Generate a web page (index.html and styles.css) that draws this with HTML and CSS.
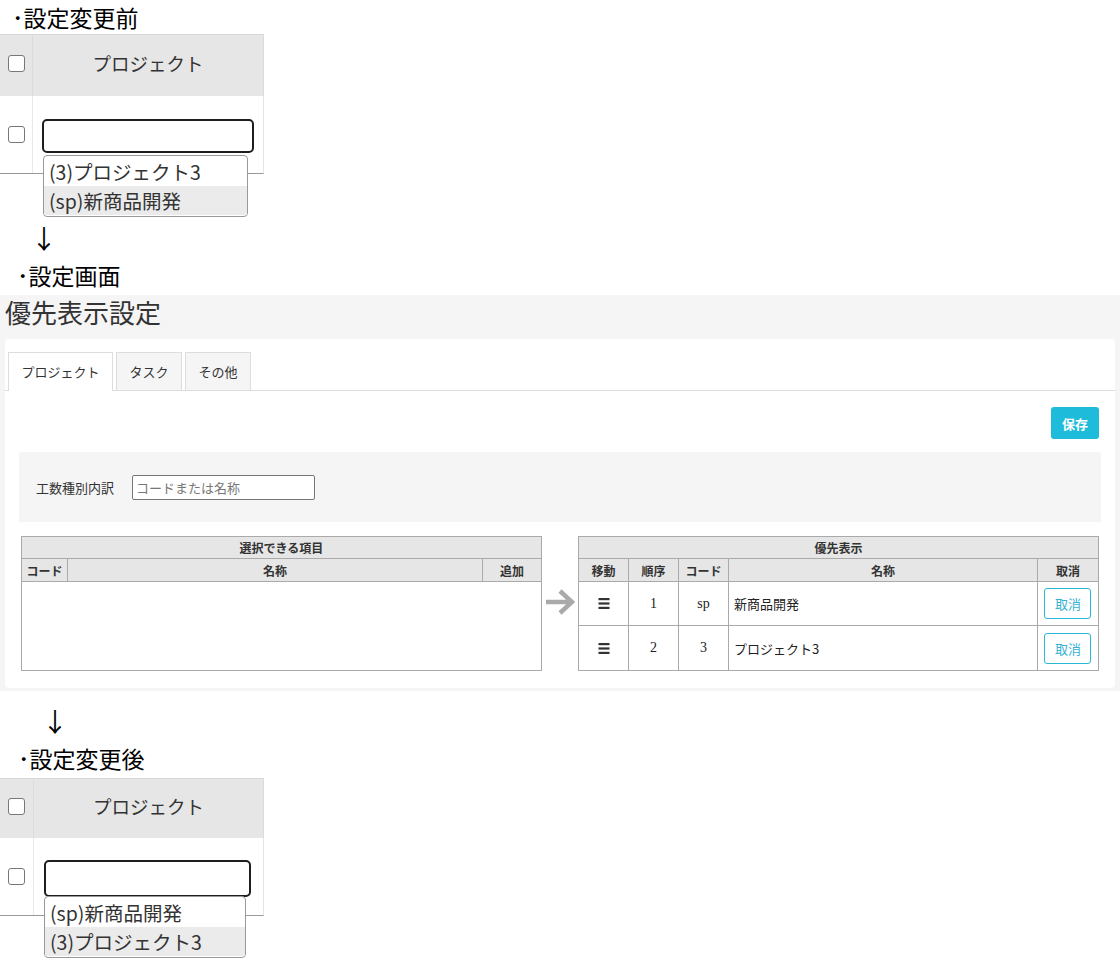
FILE: index.html
```html
<!DOCTYPE html>
<html lang="ja">
  <head>
    <meta charset="UTF-8" />
    <meta name="viewport" content="width=device-width, initial-scale=1.0" />
    <title>優先表示設定</title>
    <link rel="stylesheet" href="styles.css">
  </head>
  <body>
    <p class="caption caption-first">･設定変更前</p>

    <div class="snap">
      <div class="snap-head">
        <div class="snap-check"><span class="check"></span></div>
        <div class="snap-title">プロジェクト</div>
      </div>
      <div class="snap-row">
        <div class="snap-check"><span class="check"></span></div>
        <div class="snap-cell"><span class="snap-input"></span></div>
      </div>
      <ul class="suggest">
        <li>(3)プロジェクト3</li>
        <li class="active">(sp)新商品開発</li>
      </ul>
    </div>

    <p class="down">↓</p>
    <p class="caption">･設定画面</p>

    <div class="panel">
      <h1>優先表示設定</h1>
      <div class="card">
        <ul class="tabs">
          <li class="tab active">プロジェクト</li>
          <li class="tab">タスク</li>
          <li class="tab">その他</li>
        </ul>

        <div class="tab-body">
          <div class="toolbar">
            <button type="button" class="btn-save">保存</button>
          </div>

          <div class="filter">
            <label for="keyword">工数種別内訳</label>
            <input type="text" id="keyword" placeholder="コードまたは名称" />
          </div>

          <div class="lists">
            <table class="grid grid-source">
              <colgroup>
                <col class="w-code" />
                <col />
                <col class="w-add" />
              </colgroup>
              <thead>
                <tr class="grid-caption">
                  <th colspan="3">選択できる項目</th>
                </tr>
                <tr>
                  <th>コード</th>
                  <th>名称</th>
                  <th>追加</th>
                </tr>
              </thead>
              <tbody>
                <tr class="empty-row">
                  <td colspan="3"></td>
                </tr>
              </tbody>
            </table>

            <div class="move-arrow">
              <svg width="30" height="26" viewBox="0 0 30 26">
                <path d="M1 13 H27 M15 2 L27 13 L15 24" fill="none" stroke="#aaa" stroke-width="4.5" />
              </svg>
            </div>

            <table class="grid grid-target">
              <colgroup>
                <col class="w-small" />
                <col class="w-small" />
                <col class="w-small" />
                <col />
                <col class="w-cancel" />
              </colgroup>
              <thead>
                <tr class="grid-caption">
                  <th colspan="5">優先表示</th>
                </tr>
                <tr>
                  <th>移動</th>
                  <th>順序</th>
                  <th>コード</th>
                  <th>名称</th>
                  <th>取消</th>
                </tr>
              </thead>
              <tbody>
                <tr class="row-first">
                  <td class="handle">
                    <svg width="12" height="11" viewBox="0 0 12 11">
                      <rect x="0.5" y="0" width="11" height="2.2" fill="#333" />
                      <rect x="0.5" y="4.4" width="11" height="2.2" fill="#333" />
                      <rect x="0.5" y="8.8" width="11" height="2.2" fill="#333" />
                    </svg>
                  </td>
                  <td class="num">1</td>
                  <td class="num">sp</td>
                  <td class="name">新商品開発</td>
                  <td><button type="button" class="btn-cancel">取消</button></td>
                </tr>
                <tr class="row-last">
                  <td class="handle">
                    <svg width="12" height="11" viewBox="0 0 12 11">
                      <rect x="0.5" y="0" width="11" height="2.2" fill="#333" />
                      <rect x="0.5" y="4.4" width="11" height="2.2" fill="#333" />
                      <rect x="0.5" y="8.8" width="11" height="2.2" fill="#333" />
                    </svg>
                  </td>
                  <td class="num">2</td>
                  <td class="num">3</td>
                  <td class="name">プロジェクト3</td>
                  <td><button type="button" class="btn-cancel">取消</button></td>
                </tr>
              </tbody>
            </table>
          </div>
        </div>
      </div>
    </div>

    <p class="down down-after">↓</p>
    <p class="caption caption-after">･設定変更後</p>

    <div class="snap snap-after">
      <div class="snap-head">
        <div class="snap-check"><span class="check"></span></div>
        <div class="snap-title">プロジェクト</div>
      </div>
      <div class="snap-row">
        <div class="snap-check"><span class="check"></span></div>
        <div class="snap-cell"><span class="snap-input"></span></div>
      </div>
      <ul class="suggest">
        <li>(sp)新商品開発</li>
        <li class="active">(3)プロジェクト3</li>
      </ul>
    </div>
  </body>
</html>
```

FILE: styles.css
```css
body {
  margin: 0;
  padding-bottom: 60px;
  font-family: "Noto Sans CJK JP", "Noto Sans", sans-serif;
  color: #000;
  background: #fff;
}
ul {
  list-style: none;
  margin: 0;
  padding: 0;
}

/* captions between the screenshots */
.caption {
  margin: 2px 0 3px;
  padding-left: 17px;
  font-size: 23px;
  line-height: 34px;
}
.caption-first {
  margin: 0;
  padding-left: 12px;
}
.caption-after {
  padding-left: 18px;
}
.down {
  margin: 46px 0 0;
  padding-left: 31px;
  font-size: 26px;
  line-height: 36px;
}
.down-after {
  margin-top: 12px;
  padding-left: 42px;
}

/* project selector snapshot */
.snap {
  position: relative;
  width: 264px;
}
.snap-head {
  display: flex;
  height: 62px;
  background: #e6e6e6;
  border-top: 1px solid #d8d8d8;
  border-right: 1px solid #dcdcdc;
  box-sizing: border-box;
}
.snap-row {
  display: flex;
  height: 78px;
  border-bottom: 1px solid #999;
  border-right: 1px solid #e4e4e4;
  box-sizing: border-box;
}
.snap-check {
  width: 32px;
  flex: none;
  display: flex;
  align-items: center;
  justify-content: center;
  border-right: 1px solid #dcdcdc;
}
.snap-row .snap-check {
  border-right-color: #e8e8e8;
}
.check {
  width: 17px;
  height: 17px;
  box-sizing: border-box;
  border: 1.5px solid #777;
  border-radius: 3px;
  background: #fff;
}
.snap-head .check {
  margin-bottom: 4px;
}
.snap-title {
  flex: 1;
  display: flex;
  align-items: center;
  justify-content: center;
  padding-bottom: 5px;
  font-size: 18.5px;
  color: #333;
}
.snap-cell {
  flex: 1;
  display: flex;
  align-items: center;
  padding: 3px 0 0 9px;
}
.snap-input {
  width: 212px;
  height: 34px;
  box-sizing: border-box;
  border: 2px solid #1e1e1e;
  border-radius: 5px;
  background: #fff;
}
.suggest {
  position: absolute;
  left: 43px;
  top: 121px;
  width: 205px;
  padding: 1px 0;
  box-sizing: border-box;
  border: 1px solid #999;
  border-radius: 4px;
  background: #fff;
}
.suggest li {
  height: 29px;
  line-height: 29px;
  padding-left: 5px;
  font-size: 19.5px;
  color: #333;
}
.suggest li.active {
  background: #ebebeb;
}
.snap-after .snap-head {
  height: 60px;
}
.snap-after .snap-check {
  width: 33px;
}
.snap-after .snap-cell {
  padding: 4px 0 0 10px;
}
.snap-after .snap-input {
  width: 207px;
  height: 37px;
}
.snap-after .suggest {
  left: 44px;
  top: 118px;
  width: 202px;
}

/* settings screen */
.panel {
  background: #f5f5f5;
  padding: 0 5px 3px;
}
.panel h1 {
  margin: 0 0 10px;
  font-size: 26px;
  font-weight: normal;
  line-height: 34px;
  color: #333;
}
.card {
  background: #fff;
  border-radius: 4px;
  padding-top: 13px;
}
.tabs {
  display: flex;
  gap: 3px;
  padding-left: 3px;
  border-bottom: 1px solid #ddd;
}
.tab {
  height: 38px;
  line-height: 38px;
  padding: 0 12.5px;
  box-sizing: border-box;
  border: 1px solid #ddd;
  border-bottom: none;
  background: #f5f5f5;
  font-size: 13px;
  color: #333;
}
.tab.active {
  height: 39px;
  margin-bottom: -1px;
  background: #fff;
}
.tab-body {
  padding: 16px 14px 17px;
}
.toolbar {
  display: flex;
  justify-content: flex-end;
  padding-right: 2px;
  margin-bottom: 13px;
}
.btn-save {
  width: 48px;
  height: 32px;
  border: none;
  border-radius: 3px;
  background: #1fbbda;
  color: #fff;
  font-family: inherit;
  font-size: 13px;
  font-weight: bold;
}
.filter {
  display: flex;
  align-items: center;
  gap: 17px;
  height: 70px;
  padding-left: 17px;
  background: #f5f5f5;
  margin-bottom: 14px;
}
.filter label {
  font-size: 13px;
  color: #333;
}
.filter input {
  width: 183px;
  height: 25px;
  box-sizing: border-box;
  margin-left: 1px;
  padding: 0 3px;
  border: 1px solid #767676;
  border-radius: 2px;
  font-family: inherit;
  font-size: 13px;
}
.filter input::placeholder {
  color: #777;
}
.lists {
  display: flex;
  align-items: flex-start;
  justify-content: space-between;
  padding: 0 2px;
}
.move-arrow {
  padding-top: 53px;
}
.grid {
  width: 521px;
  border-collapse: collapse;
  table-layout: fixed;
  border: 1px solid #aaa;
  font-size: 13px;
  color: #222;
}
.w-code {
  width: 46px;
}
.w-add {
  width: 59px;
}
.w-small {
  width: 50px;
}
.w-cancel {
  width: 61px;
}
.grid th,
.grid td {
  border: 1px solid #aaa;
  padding: 0;
}
.grid th {
  height: 22px;
  background: #e6e6e6;
  font-size: 12px;
  font-weight: bold;
  color: #333;
}
.grid .grid-caption th {
  height: 21px;
}
.empty-row td {
  height: 88px;
}
.grid tbody td {
  text-align: center;
}
.row-first td {
  height: 43px;
}
.row-last td {
  height: 44px;
}
.grid .handle svg {
  display: block;
  margin: 0 auto;
}
.grid .num {
  font-family: "Liberation Serif", serif;
  font-size: 14px;
  color: #222;
}
.grid .name {
  text-align: left;
  padding-left: 5px;
}
.btn-cancel {
  display: block;
  margin: 0 auto;
  width: 47px;
  height: 31px;
  border: 1px solid #2bb8d8;
  border-radius: 3px;
  background: #fff;
  color: #38b2d3;
  font-family: inherit;
  font-size: 13px;
}
```
